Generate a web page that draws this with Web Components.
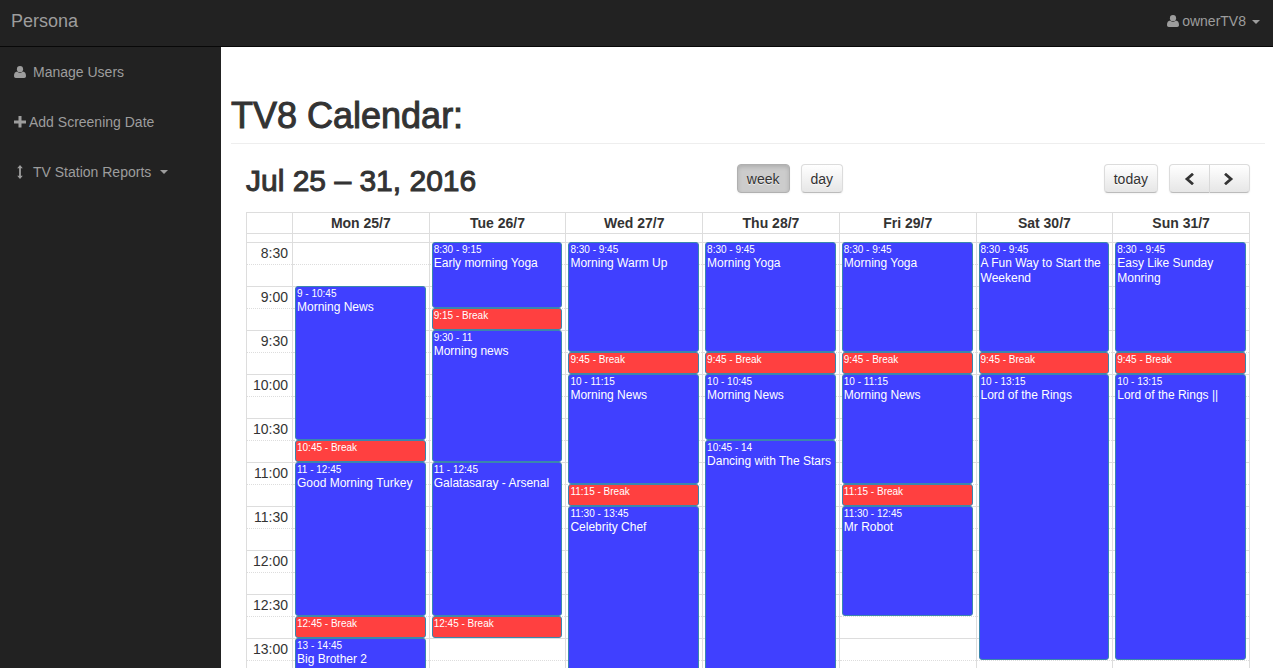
<!DOCTYPE html>
<html lang="en">
<head>
<meta charset="utf-8">
<title>Persona - TV8 Calendar</title>
<style>
  html, body { height: 100%; margin: 0; }
  body {
    font-family: "Liberation Sans", Arial, sans-serif;
    font-size: 14px;
    line-height: 20px;
    color: #333;
    background: #fff;
    overflow: hidden;
  }
</style>
</head>
<body>
<persona-app>
  <top-bar slot="top" brand="Persona"><ui-icon name="user"></ui-icon><span>ownerTV8</span><ui-icon name="caret"></ui-icon></top-bar>
  <side-nav slot="side">
    <nav-item><ui-icon slot="icon" name="user"></ui-icon>Manage Users</nav-item>
    <nav-item compact><ui-icon slot="icon" name="plus"></ui-icon>Add Screening Date</nav-item>
    <nav-item><ui-icon slot="icon" name="resize"></ui-icon>TV Station Reports<ui-icon slot="after" name="caret"></ui-icon></nav-item>
  </side-nav>
  <page-title>TV8 Calendar:</page-title>
  <calendar-toolbar>Jul 25 – 31, 2016</calendar-toolbar>
  <week-calendar></week-calendar>
</persona-app>

<script>
const define = (name, html, setup) => {
  const template = document.createElement('template');
  template.innerHTML = html;
  customElements.define(name, class extends HTMLElement {
    constructor() {
      super();
      this.attachShadow({ mode: 'open' }).append(template.content.cloneNode(true));
    }
    connectedCallback() {
      if (setup && !this.ready) { this.ready = true; setup(this, this.shadowRoot); }
    }
  });
};

const ICONS = {
  user: [12, 12, '<path d="M3.200 5.600C4 6.500 4.900 7 6 7S8 6.500 8.800 5.600C11 5.700 12 7.600 12 10 12 11.200 11.300 12 10.200 12H1.800C.7 12 0 11.200 0 10 0 7.600 1 5.700 3.200 5.600Z"/><circle cx="6" cy="3.200" r="3.100"/>'],
  plus: [12, 12, '<path d="M4.500 0h3v4.500H12v3H7.500V11.500h-3V7.500H0v-3h4.500z"/>'],
  resize: [12, 14, '<path d="M6 0 8.800 3.200H6.900V10.800H8.800L6 14 3.200 10.800H5.100V3.200H3.200z"/>'],
  caret: [8, 4, '<path d="M0 0h8L4 4z"/>'],
  left: [10, 12, '<path d="M9 .8 3 6l6 5.200" fill="none" stroke="currentColor" stroke-width="2.800"/>'],
  right: [10, 12, '<path d="M1 .8 7 6l-6 5.200" fill="none" stroke="currentColor" stroke-width="2.800"/>']
};

define('ui-icon', `
  <style>:host { display: inline-flex; flex: none; } svg { display: block; }</style>`,
  (el, root) => {
    const [w, h, body] = ICONS[el.getAttribute('name')];
    root.innerHTML += `<svg width="${w}" height="${h}" viewBox="0 0 ${w} ${h}" fill="currentColor" aria-hidden="true">${body}</svg>`;
  });

define('persona-app', `
  <style>
    :host { display: grid; grid-template: auto 1fr / 221px 1fr; height: 100vh; overflow: hidden; }
    slot[name=top] { display: block; grid-column: 1 / 3; }
    slot[name=side] { display: grid; }
    main { min-width: 0; overflow: hidden; padding: 49px 8px 0 10px; }
  </style>
  <slot name="top"></slot>
  <slot name="side"></slot>
  <main><slot></slot></main>`);

define('top-bar', `
  <style>
    :host { display: block; background: #222; border-bottom: 1px solid #080808; }
    nav { display: flex; justify-content: space-between; height: 46px; padding: 0 13px 4px 11px; box-sizing: border-box; }
    a { display: flex; align-items: center; gap: 3px; color: #9d9d9d; text-decoration: none; }
    .brand { font-size: 18px; }
    ::slotted(ui-icon[name=caret]) { margin-left: 3px; margin-top: 2px; }
  </style>
  <nav><a class="brand" href="#"></a><a href="#"><slot></slot></a></nav>`,
  (el, root) => { root.querySelector('.brand').textContent = el.getAttribute('brand'); });

define('side-nav', `
  <style>:host { display: block; background: #222; } nav { display: flex; flex-direction: column; }</style>
  <nav><slot></slot></nav>`);

define('nav-item', `
  <style>
    :host { display: block; }
    a { display: flex; align-items: center; gap: 7px; padding: 15px 14px; color: #9d9d9d; text-decoration: none; }
    :host([compact]) a { gap: 3px; }
    ::slotted([slot=after]) { margin-left: 2px; }
  </style>
  <a href="#"><slot name="icon"></slot><span><slot></slot></span><slot name="after"></slot></a>`);

define('page-title', `
  <style>
    :host { display: block; border-bottom: 1px solid #eee; padding-bottom: 7px; }
    h1 { margin: 0; font-size: 36px; line-height: 40px; font-weight: 400; -webkit-text-stroke: 1px currentColor; }
  </style>
  <h1><slot></slot></h1>`);

define('calendar-toolbar', `
  <style>
    :host { display: flex; justify-content: space-between; margin: 20px 15px 0; height: 48px; align-items: flex-start; }
    h2 { margin: 0; font-size: 30px; line-height: 34px; font-weight: 400; -webkit-text-stroke: 1px currentColor; }
    div { display: flex; gap: 11px; }
    .group { gap: 0; }
    button {
      height: 29px; padding: 0 9px; font: inherit; color: #333; text-shadow: 0 1px 1px rgba(255,255,255,.75);
      border: 1px solid; border-color: #dcdcdc #dcdcdc #bbb; border-radius: 4px;
      background: linear-gradient(#fff, #e6e6e6);
      box-shadow: inset 0 1px 0 rgba(255,255,255,.2), 0 1px 2px rgba(0,0,0,.05);
    }
    button.active { background: #ccc; border-color: #b0b0b0; box-shadow: inset 0 2px 4px rgba(0,0,0,.15), 0 1px 2px rgba(0,0,0,.05); }
    .group button { display: grid; place-items: center; width: 41px; }
    .group button:first-child { border-radius: 4px 0 0 4px; }
    .group button:last-child { border-radius: 0 4px 4px 0; border-left: 0; width: 40px; }
  </style>
  <h2><slot></slot></h2>
  <div><button type="button" class="active">week</button><button type="button">day</button></div>
  <div>
    <button type="button">today</button>
    <div class="group">
      <button type="button" aria-label="Previous"><ui-icon name="left"></ui-icon></button>
      <button type="button" aria-label="Next"><ui-icon name="right"></ui-icon></button>
    </div>
  </div>`);

define('calendar-event', `
  <style>
    :host {
      display: block; box-sizing: border-box; overflow: hidden; z-index: 1;
      margin: 0 3px 0 2px; padding: 0 1px;
      border: 1px solid #3a87ad; border-radius: 3px;
      background: #4040ff; color: #fff; font-size: 12px; line-height: 15px;
    }
    :host([kind=break]) { background: #ff4040; font-size: 10px; line-height: 13px; }
    ::slotted(time) { display: block; font-size: 10px; line-height: 13px; }
  </style>
  <slot name="time"></slot><slot></slot>`);

/* The visible part of the day: quarter-hour slots from 8:30 to 13:30. */
const START = 8.5, END = 13.5, SLOTS = (END - START) * 4;
const slotRow = t => (Math.min(t, END) - START) * 4 + 1;
const clock = t => {
  const m = (t % 1) * 60;
  return m ? Math.floor(t) + ':' + m : String(t);
};
const LINES = `
    .slots { display: grid; grid-template-rows: repeat(${SLOTS}, 22px); padding-top: 8px; }
    .line { border-top: 1px solid #ddd; grid-column: 1; }
    .line.minor { border-top-style: dotted; }`;
const addLines = (box, label) => {
  for (let i = 0; i < SLOTS; i++) {
    const line = document.createElement('div');
    line.className = i % 2 ? 'line minor' : 'line';
    line.style.gridRow = i + 1;
    if (label && i % 2 === 0) {
      const t = START + i / 4;
      line.textContent = Math.floor(t) + (t % 1 ? ':30' : ':00');
    }
    box.append(line);
  }
};

define('time-axis', `
  <style>:host { display: block; text-align: right; } ${LINES} .line { padding-right: 4px; line-height: 21px; }</style>
  <div class="slots"></div>`,
  (el, root) => addLines(root.querySelector('.slots'), true));

define('day-column', `
  <style>:host { display: block; } ${LINES} calendar-event { grid-column: 1; }</style>
  <div class="slots"></div>`,
  (el, root) => {
    const box = root.querySelector('.slots');
    addLines(box, false);
    for (const [from, to, title] of el.events) {
      const ev = document.createElement('calendar-event');
      ev.style.gridRow = `${slotRow(from)} / ${slotRow(to)}`;
      if (title === 'Break') {
        ev.setAttribute('kind', 'break');
        ev.textContent = `${clock(from)} - Break`;
      } else {
        const time = document.createElement('time');
        time.slot = 'time';
        time.textContent = `${clock(from)} - ${clock(to)}`;
        ev.append(time, title);
      }
      box.append(ev);
    }
  });

const WEEK = [
  ['Mon 25/7', [[9, 10.75, 'Morning News'], [10.75, 11, 'Break'], [11, 12.75, 'Good Morning Turkey'], [12.75, 13, 'Break'], [13, 14.75, 'Big Brother 2']]],
  ['Tue 26/7', [[8.5, 9.25, 'Early morning Yoga'], [9.25, 9.5, 'Break'], [9.5, 11, 'Morning news'], [11, 12.75, 'Galatasaray - Arsenal'], [12.75, 13, 'Break']]],
  ['Wed 27/7', [[8.5, 9.75, 'Morning Warm Up'], [9.75, 10, 'Break'], [10, 11.25, 'Morning News'], [11.25, 11.5, 'Break'], [11.5, 13.75, 'Celebrity Chef']]],
  ['Thu 28/7', [[8.5, 9.75, 'Morning Yoga'], [9.75, 10, 'Break'], [10, 10.75, 'Morning News'], [10.75, 14, 'Dancing with The Stars']]],
  ['Fri 29/7', [[8.5, 9.75, 'Morning Yoga'], [9.75, 10, 'Break'], [10, 11.25, 'Morning News'], [11.25, 11.5, 'Break'], [11.5, 12.75, 'Mr Robot']]],
  ['Sat 30/7', [[8.5, 9.75, 'A Fun Way to Start the Weekend'], [9.75, 10, 'Break'], [10, 13.25, 'Lord of the Rings']]],
  ['Sun 31/7', [[8.5, 9.75, 'Easy Like Sunday Monring'], [9.75, 10, 'Break'], [10, 13.25, 'Lord of the Rings ||']]]
];

define('week-calendar', `
  <style>
    :host { display: block; margin: 0 15px; border-right: 1px solid #ddd; }
    table { width: 100%; table-layout: fixed; border-collapse: separate; border-spacing: 0; }
    .axis { width: 46px; box-sizing: border-box; }
    th, td { padding: 0; border: 0 solid #ddd; border-width: 1px 0 0 1px; vertical-align: top; }
    th { font-weight: 700; text-align: center; }
  </style>
  <table>
    <thead><tr><td class="axis"></td></tr></thead>
    <tbody><tr><td class="axis"><time-axis></time-axis></td></tr></tbody>
  </table>`,
  (el, root) => {
    const [head, body] = root.querySelectorAll('tr');
    for (const [name, events] of WEEK) {
      const th = document.createElement('th');
      th.scope = 'col';
      th.textContent = name;
      head.append(th);
      const td = document.createElement('td');
      const day = document.createElement('day-column');
      day.events = events;
      td.append(day);
      body.append(td);
    }
  });
</script>
</body>
</html>
